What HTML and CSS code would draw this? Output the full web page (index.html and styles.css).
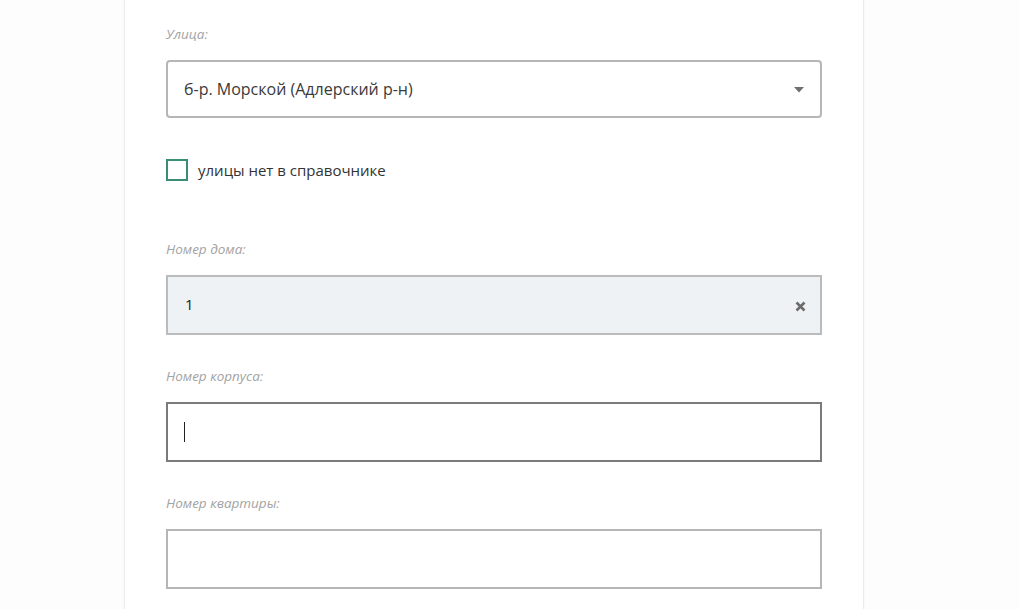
FILE: index.html
```html
<!DOCTYPE html>
<html lang="ru">
<head>
<meta charset="utf-8">
<link rel="stylesheet" href="styles.css">
</head>
<body>
<div class="page">
  <div class="card">
    <div class="field">
      <div class="label">Улица:</div>
      <div class="select">
        <span>б-р. Морской (Адлерский р-н)</span>
        <svg class="caret" width="10" height="6" viewBox="0 0 10 6"><path d="M0 0 H10 L5 5.5 Z" fill="#6f6f6f"/></svg>
      </div>
    </div>
    <label class="check">
      <span class="box"></span>
      <span class="check-text">улицы нет в справочнике</span>
    </label>
    <div class="field">
      <div class="label">Номер дома:</div>
      <div class="input filled">
        <span>1</span>
        <svg class="clear" width="11" height="11" viewBox="0 0 11 11"><path d="M1.5 1.5 L9.5 9.5 M9.5 1.5 L1.5 9.5" stroke="#6b6b6b" stroke-width="2.6"/></svg>
      </div>
    </div>
    <div class="field">
      <div class="label">Номер корпуса:</div>
      <div class="input focused"><span class="cursor"></span></div>
    </div>
    <div class="field">
      <div class="label">Номер квартиры:</div>
      <div class="input"></div>
    </div>
  </div>
</div>
</body>
</html>
```

FILE: styles.css
```css
html, body {
  margin: 0;
  padding: 0;
  background: #fdfdfd;
  font-family: "Open Sans", "Noto Sans", sans-serif;
  color: #333;
  overflow: hidden;
}
.page {
  display: flex;
  padding-left: 124px;
  height: 609px;
}
.card {
  box-sizing: border-box;
  width: 740px;
  background: #fff;
  border-left: 1px solid #ececec;
  border-right: 1px solid #ececec;
  box-shadow: 0 0 3px rgba(0,0,0,0.04);
  padding: 25px 41px 0 41px;
  display: flex;
  flex-direction: column;
}
.field {
  display: flex;
  flex-direction: column;
  margin-bottom: 32px;
}
.label {
  font-size: 13.5px;
  font-style: italic;
  line-height: 18px;
  color: #a3a3a3;
  margin-bottom: 17px;
}
.select, .input {
  box-sizing: border-box;
  width: 656px;
  height: 60px;
  border: 2px solid #b6b6b6;
  display: flex;
  align-items: center;
  justify-content: space-between;
  padding: 0 16px;
  font-size: 16px;
}
.select {
  height: 58px;
  border-radius: 4px;
  background: #fff;
  color: #3a3a3a;
}
.field:first-child { margin-bottom: 33px; }
.caret { margin-top: 1px; }
.check {
  display: flex;
  align-items: center;
  gap: 10px;
  margin-top: 8px;
  margin-bottom: 59px;
}
.box {
  box-sizing: border-box;
  width: 22px;
  height: 22px;
  border: 2px solid #3b8c74;
}
.check-text {
  font-size: 15px;
  color: #333;
}
.input.filled {
  background: #eef2f5;
  border-color: #b9bbbd;
  padding-right: 14px;
}
.input.filled span { font-size: 15px; color: #222; margin-left: 1px; margin-top: -3px; }
.clear { margin-top: 2px; }
.input.focused {
  border-color: #7b7b7b;
}
.cursor {
  display: block;
  width: 1px;
  height: 20px;
  background: #222;
}
```
